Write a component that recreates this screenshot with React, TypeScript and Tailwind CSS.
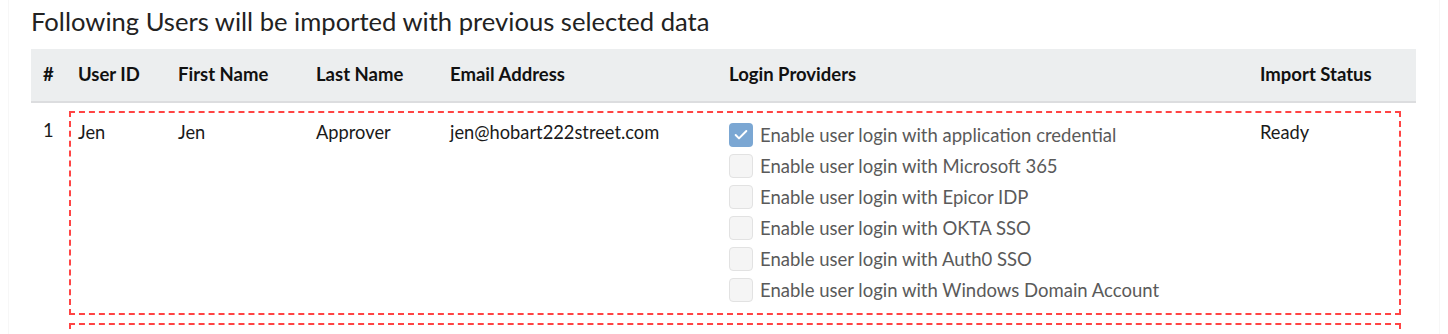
import { Check } from 'lucide-react';

const providers = [
  { label: 'Enable user login with application credential', checked: true },
  { label: 'Enable user login with Microsoft 365', checked: false },
  { label: 'Enable user login with Epicor IDP', checked: false },
  { label: 'Enable user login with OKTA SSO', checked: false },
  { label: 'Enable user login with Auth0 SSO', checked: false },
  { label: 'Enable user login with Windows Domain Account', checked: false },
];

const font = { fontFamily: 'Lato, "Noto Sans", sans-serif' };

function ProviderCheck({ label, checked }: { label: string; checked: boolean }) {
  return (
    <div className="flex h-[31px] items-center gap-[7px]">
      {checked ? (
        <span className="flex h-[24px] w-[24px] items-center justify-center rounded-[4px] bg-[#7ba7d3]">
          <Check size={16} strokeWidth={3} className="text-white" />
        </span>
      ) : (
        <span className="h-[24px] w-[24px] rounded-[4px] border border-[#e2e2e2] bg-[#f5f5f5]" />
      )}
      <span className="pt-[2px] text-[18.5px] text-[#5a5a5a]">{label}</span>
    </div>
  );
}

export default function App() {
  return (
    <div className="h-[334px] overflow-hidden bg-white px-[8px]" style={font}>
      <div className="h-full border-x border-[#f7f7f7] pl-[22px] pr-[23px]">
        <h2 className="pt-[4px] text-[25.6px] leading-[35px] text-[#222]">
          Following Users will be imported with previous selected data
        </h2>

        <div className="mt-[10px] flex h-[54px] items-center border-b-2 border-[#dcdddf] bg-[#eceeef] pl-[12px] text-[18.5px] font-bold text-[#111]">
          <div className="w-[35px]">#</div>
          <div className="w-[100px]">User ID</div>
          <div className="w-[138px]">First Name</div>
          <div className="w-[134px]">Last Name</div>
          <div className="w-[279px]">Email Address</div>
          <div className="w-[531px]">Login Providers</div>
          <div className="flex-1">Import Status</div>
        </div>

        <div className="mt-[8px] flex pl-[12px] text-[18.3px] text-[#1a1a1a]">
          <div className="w-[26px] pt-[7px] leading-[24px]">1</div>
          <div className="flex w-[1332px] border-2 border-dashed border-[#f44] pl-[7px] pb-[8px] pt-[6px]">
            <div className="w-[100px] pt-[1px] leading-[24px]">Jen</div>
            <div className="w-[138px] pt-[1px] leading-[24px]">Jen</div>
            <div className="w-[134px] pt-[1px] leading-[24px]">Approver</div>
            <div className="w-[279px] pt-[1px] leading-[24px]">jen@hobart222street.com</div>
            <div className="w-[531px]">
              {providers.map((p) => (
                <ProviderCheck key={p.label} label={p.label} checked={p.checked} />
              ))}
            </div>
            <div className="flex-1 pt-[1px] leading-[24px]">Ready</div>
          </div>
        </div>

        <div className="mt-[8px] flex pl-[12px]">
          <div className="w-[26px]" />
          <div className="h-[40px] w-[1332px] border-2 border-dashed border-[#f44]" />
        </div>
      </div>
    </div>
  );
}
